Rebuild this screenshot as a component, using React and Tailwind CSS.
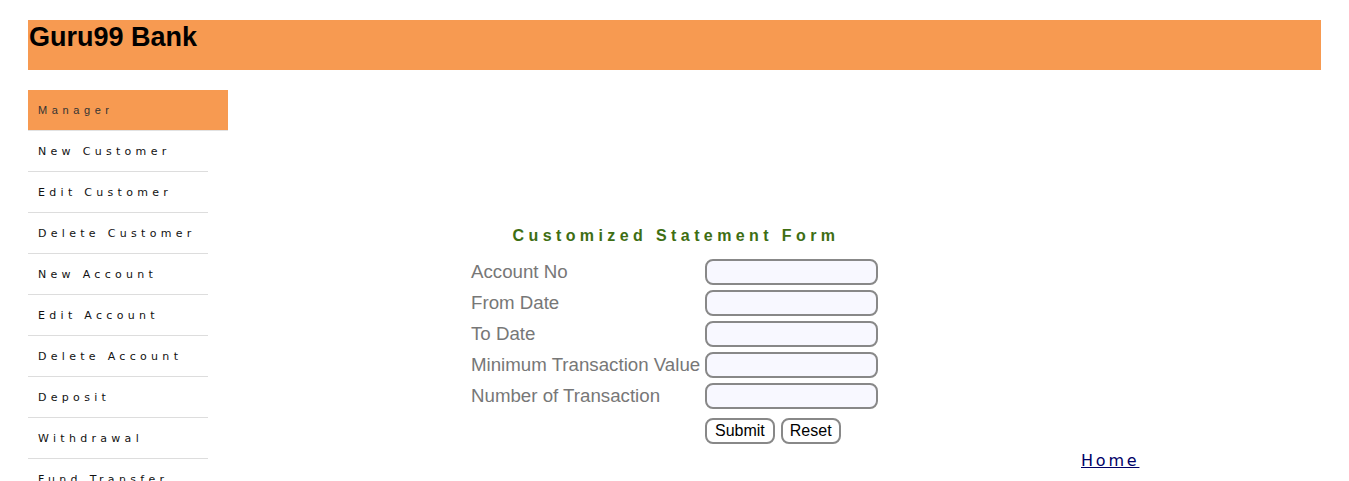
import React from 'react';

const menu = [
    'New Customer',
    'Edit Customer',
    'Delete Customer',
    'New Account',
    'Edit Account',
    'Delete Account',
    'Deposit',
    'Withdrawal',
    'Fund Transfer',
    'Change Password',
    'Balance Enquiry',
];

const fields = [
    'Account No',
    'From Date',
    'To Date',
    'Minimum Transaction Value',
    'Number of Transaction',
];

const App = () => {
    return (
        <div className="min-h-screen bg-white pt-5 px-7" style={{ fontFamily: '"Liberation Sans", Arial, sans-serif' }}>
            <div className="w-[1293px] h-[50px] bg-[#f79a51]">
                <h2 className="text-[27px] leading-[34px] font-bold text-black pl-px">Guru99 Bank</h2>
            </div>

            <div className="flex mt-5">
                <ul className="w-[200px] shrink-0">
                    <li className="h-[41px] bg-[#f79a51] border-b border-[#e2e2e2] flex items-center pl-[10px] text-[11px] tracking-[4.6px] text-[#333]">
                        Manager
                    </li>
                    {menu.map((m) => (
                        <li key={m} className="w-[180px] h-[41px] border-b border-[#dddddd] flex items-center pl-[10px] pt-[2px] text-[11px] tracking-[4.3px] text-[#111]" style={{ fontFamily: '"DejaVu Sans", Verdana, sans-serif' }}>
                            {m}
                        </li>
                    ))}
                </ul>

                <div className="flex-1">
                    <div className="ml-[243px] mt-[136px] w-[406px]">
                        <p className="text-center text-[16px] leading-[20px] font-bold tracking-[4.4px] text-[#3e6e13] pl-[4px]">
                            Customized Statement Form
                        </p>
                        <div className="grid grid-cols-[234px_172px] gap-y-[5px] mt-[13px]">
                            {fields.map((f) => (
                                <React.Fragment key={f}>
                                    <label className="text-[18.7px] leading-[25px] text-[#777777]">{f}</label>
                                    <input type="text" className="h-[26px] w-[173px] rounded-[8px] border-2 border-[#888888] bg-[#f8f8ff] outline-none" />
                                </React.Fragment>
                            ))}
                        </div>
                        <div className="flex gap-[6px] ml-[234px] mt-[9px]">
                            <button className="h-[26px] px-[8px] rounded-[8px] border-2 border-[#888888] bg-white text-[16px] leading-[20px] text-black">Submit</button>
                            <button className="h-[26px] px-[7px] rounded-[8px] border-2 border-[#888888] bg-white text-[16px] leading-[20px] text-black">Reset</button>
                        </div>
                    </div>
                    <div className="ml-[853px] mt-[5px]">
                        <a href="#" className="text-[16px] leading-[22px] tracking-[2.8px] text-[#000066] underline" style={{ fontFamily: '"DejaVu Sans", sans-serif' }}>Home</a>
                    </div>
                </div>
            </div>
        </div>
    );
};

export default App;
